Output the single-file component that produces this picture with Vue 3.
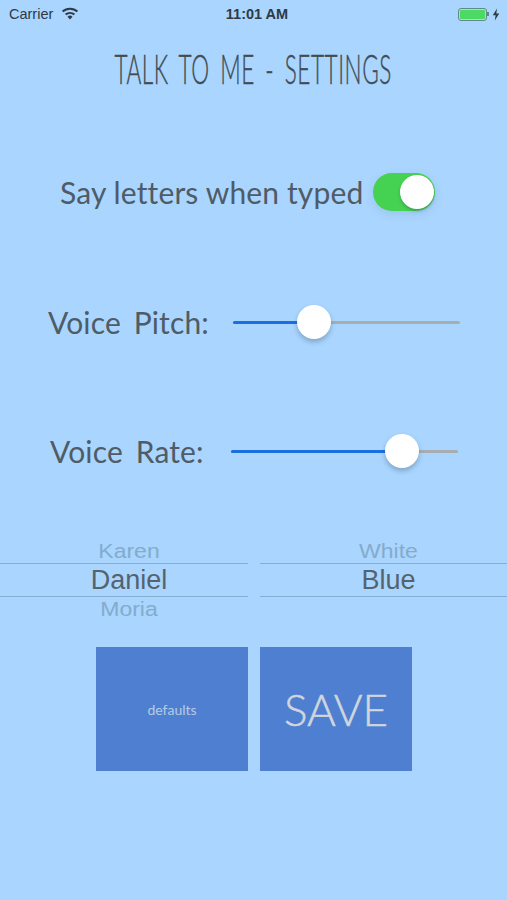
<script setup>
const sliders = [
  { label: 'Voice Pitch:', cls: 'pitch', fill: 35.9 },
  { label: 'Voice Rate:', cls: 'rate', fill: 75.3 },
]
const pickers = [
  { top: 'Karen', mid: 'Daniel', bottom: 'Moria' },
  { top: 'White', mid: 'Blue', bottom: '' },
]
</script>

<template>
  <div class="page">
    <header class="status">
      <div class="status-left">
        <span>Carrier</span>
        <svg class="wifi" viewBox="0 0 18 13" width="18" height="13" aria-hidden="true">
          <path d="M9 12.6 L6.5 9.7 A3.8 3.8 0 0 1 11.5 9.7 Z" fill="#2f3a44" />
          <path d="M4.6 7.6 A6.6 6.6 0 0 1 13.4 7.6" fill="none" stroke="#2f3a44" stroke-width="2" />
          <path d="M1.6 4.6 A10.8 10.8 0 0 1 16.4 4.6" fill="none" stroke="#2f3a44" stroke-width="2" />
        </svg>
      </div>
      <span class="time">11:01 AM</span>
      <div class="status-right">
        <span class="battery"><span class="battery-fill"></span></span>
        <span class="battery-tip"></span>
        <svg viewBox="0 0 8 13" width="8" height="13" aria-hidden="true">
          <path d="M5 0.5 L0.8 7.2 H3.6 L2.8 12.5 L7.2 5.6 H4.3 Z" fill="#2f3a44" />
        </svg>
      </div>
    </header>

    <h1 class="title"><span>TALK TO ME - SETTINGS</span></h1>

    <section class="toggle-row">
      <span class="label">Say letters when typed</span>
      <span class="switch"><span class="knob"></span></span>
    </section>

    <section v-for="s in sliders" :key="s.cls" class="slider-row" :class="s.cls">
      <span class="label wide">{{ s.label }}</span>
      <div class="track">
        <div class="track-fill" :style="{ width: s.fill + '%' }"></div>
        <div class="thumb" :style="{ left: s.fill + '%' }"></div>
      </div>
    </section>

    <section class="pickers">
      <div v-for="p in pickers" :key="p.mid" class="picker">
        <div class="faded upper">{{ p.top }}</div>
        <div class="selected">{{ p.mid }}</div>
        <div class="faded lower">{{ p.bottom }}</div>
      </div>
    </section>

    <section class="buttons">
      <button class="btn small" type="button">defaults</button>
      <button class="btn big" type="button">SAVE</button>
    </section>
  </div>
</template>

<style scoped>
.page {
  width: 507px;
  height: 900px;
  overflow: hidden;
  background: #a9d5fe;
  color: #4f5b66;
  font-family: Lato, "Open Sans", sans-serif;
  display: flex;
  flex-direction: column;
}
.status {
  height: 28px;
  display: grid;
  grid-template-columns: 1fr auto 1fr;
  align-items: center;
  padding: 0 7px 0 9px;
  font-family: "Liberation Sans", Arial, sans-serif;
  font-size: 14.5px;
  color: #2f3a44;
}
.status-left {
  display: flex;
  align-items: center;
  gap: 8px;
}
.wifi {
  margin-top: -2px;
}
.time {
  font-weight: 700;
  font-size: 14.5px;
  padding-left: 5px;
}
.status-right {
  display: flex;
  align-items: center;
  justify-content: flex-end;
}
.battery {
  width: 29px;
  height: 13px;
  box-sizing: border-box;
  border: 1px solid #5f8a8c;
  border-radius: 3px;
  padding: 1px;
  display: flex;
}
.battery-fill {
  flex: 1;
  background: #4cd964;
  border-radius: 1px;
}
.battery-tip {
  width: 2px;
  height: 4px;
  background: #5f8a8c;
  margin-right: 3px;
}
.title {
  margin: 17px 0 0;
  height: 46px;
  display: flex;
  justify-content: center;
  align-items: center;
  font-family: Lato, sans-serif;
  font-weight: 300;
  font-size: 41px;
  color: #434b52;
  white-space: nowrap;
}
.title span {
  display: block;
  transform: scaleX(0.55);
  word-spacing: 7px;
  letter-spacing: 1px;
  -webkit-text-stroke: 0.4px #434b52;
}
.label {
  font-size: 30px;
  line-height: 38px;
  white-space: nowrap;
  letter-spacing: 0.14px;
}
.label.wide {
  word-spacing: 5px;
}
.toggle-row {
  margin-top: 82px;
  height: 38px;
  padding-left: 60px;
  display: flex;
  align-items: center;
}
.toggle-row .label {
  width: 313px;
}
.switch {
  width: 62px;
  height: 38px;
  border-radius: 19px;
  background: #45d152;
  position: relative;
  box-shadow: 0 3px 8px rgba(70, 110, 150, 0.15);
}
.knob {
  position: absolute;
  right: 1px;
  top: 2px;
  width: 34px;
  height: 34px;
  border-radius: 50%;
  background: #fff;
  box-shadow: 0 2px 3px rgba(40, 60, 80, 0.3);
}
.slider-row {
  height: 38px;
  display: flex;
  align-items: center;
}
.slider-row.pitch {
  margin-top: 92px;
  padding-left: 48px;
}
.slider-row.pitch .label {
  width: 185px;
}
.slider-row.rate {
  margin-top: 91px;
  padding-left: 50px;
}
.slider-row.rate .label {
  width: 181px;
}
.track {
  position: relative;
  width: 227px;
  height: 3px;
  background: #a8adb4;
  border-radius: 2px;
}
.track-fill {
  height: 100%;
  background: #1a6fe0;
  border-radius: 2px;
}
.thumb {
  position: absolute;
  top: 50%;
  width: 34px;
  height: 34px;
  margin: -17px 0 0 -17px;
  border-radius: 50%;
  background: #fff;
  box-shadow: 0 3px 5px rgba(40, 60, 80, 0.3);
}
.pickers {
  margin-top: 63px;
  display: grid;
  grid-template-columns: 248px 247px;
  column-gap: 12px;
  font-family: "Liberation Sans", Arial, sans-serif;
  text-align: center;
}
.picker {
  display: grid;
  grid-template-rows: 30px 34px 29px;
}
.faded {
  font-size: 23px;
  line-height: 29px;
  padding-left: 10px;
  color: #84abcd;
  transform: scaleY(0.9);
}
.faded.upper {
  padding-top: 4px;
  height: 26px;
}
.faded.lower {
  height: 27px;
  line-height: 25px;
}
.selected {
  font-size: 27px;
  line-height: 32px;
  color: #56636e;
  padding-left: 10px;
  border-top: 1px solid #86add0;
  border-bottom: 1px solid #86add0;
  box-sizing: border-box;
}
.buttons {
  margin-top: 21px;
  display: flex;
  gap: 12px;
  padding-left: 96px;
}
.btn {
  width: 152px;
  height: 124px;
  border: 0;
  padding: 0;
  background: #4f7fd1;
  font-family: Lato, "Open Sans", sans-serif;
  color: #d0d6dc;
}
.btn.small {
  font-size: 14px;
  color: #b7cbe4;
}
.btn.big {
  font-size: 44px;
  font-weight: 300;
  -webkit-text-stroke: 0.5px #d0d6dc;
}
</style>
